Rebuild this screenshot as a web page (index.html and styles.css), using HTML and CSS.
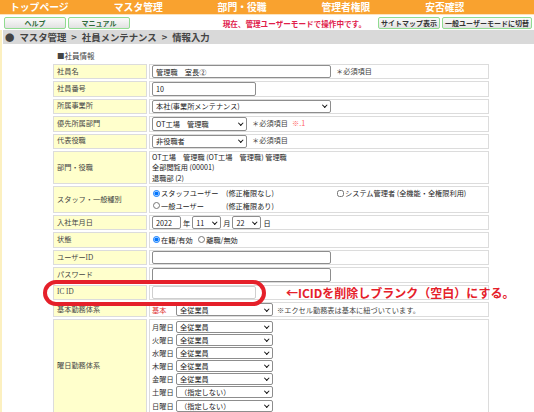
FILE: index.html
```html
<!DOCTYPE html>
<html lang="ja">
<head>
    <meta charset="UTF-8">
    <meta name="viewport" content="width=device-width, initial-scale=1.0">
    <title>社員メンテナンス</title>
    <link rel="stylesheet" href="styles.css">
</head>
<body>
    <div class="top-menu">
        <span>トップページ</span>
        <span>マスタ管理</span>
        <span>部門・役職</span>
        <span>管理者権限</span>
        <span>安否確認</span>
    </div>
    <div class="tool-bar">
        <button class="btn btn-left">ヘルプ</button>
        <button class="btn btn-left">マニュアル</button>
        <span class="mode-msg">現在、管理ユーザーモードで操作中です。</span>
        <button class="btn btn-sitemap">サイトマップ表示</button>
        <button class="btn btn-switch">一般ユーザーモードに切替</button>
    </div>

    <div class="main">
        <div class="breadcrumb"><span class="dot">●</span>マスタ管理<span class="sep">&gt;</span>社員メンテナンス<span class="sep">&gt;</span>情報入力</div>
        <div class="section-title">■社員情報</div>

        <table class="form-table">
            <tr>
                <td class="label">社員名</td>
                <td class="value"><input type="text" class="w-long" value="管理職　室長②"><span class="req">＊必須項目</span></td>
            </tr>
            <tr>
                <td class="label">社員番号</td>
                <td class="value"><input type="text" class="w-short" value="10"></td>
            </tr>
            <tr>
                <td class="label">所属事業所</td>
                <td class="value"><span class="sel"><select class="w-long"><option>本社(事業所メンテナンス)</option></select></span></td>
            </tr>
            <tr>
                <td class="label">優先所属部門</td>
                <td class="value"><span class="sel"><select class="w-mid"><option>OT工場　管理職</option></select></span><span class="req">＊必須項目</span><span class="note-red">※.1</span></td>
            </tr>
            <tr>
                <td class="label">代表役職</td>
                <td class="value"><span class="sel"><select class="w-mid"><option>非役職者</option></select></span><span class="req">＊必須項目</span></td>
            </tr>
            <tr>
                <td class="label">部門・役職</td>
                <td class="value multi">
                    OT工場　管理職 (OT工場　管理職) 管理職<br>
                    全部閲覧用 (00001)<br>
                    退職部 (2)
                </td>
            </tr>
            <tr>
                <td class="label">スタッフ・一般種別</td>
                <td class="value">
                    <div class="kind-grid">
                        <label><input type="radio" name="kind" checked>スタッフユーザー</label>
                        <span>(修正権限なし)</span>
                        <label><input type="checkbox">システム管理者 (全機能・全権限利用)</label>
                        <label><input type="radio" name="kind">一般ユーザー</label>
                        <span>(修正権限あり)</span>
                    </div>
                </td>
            </tr>
            <tr>
                <td class="label">入社年月日</td>
                <td class="value">
                    <input type="text" class="w-year" value="2022"><span class="unit">年</span><span class="sel"><select class="w-md"><option>11</option></select></span><span class="unit">月</span><span class="sel"><select class="w-md"><option>22</option></select></span><span class="unit">日</span>
                </td>
            </tr>
            <tr>
                <td class="label">状態</td>
                <td class="value">
                    <label class="state"><input type="radio" name="state" checked>在籍/有効</label>
                    <label class="state"><input type="radio" name="state">離職/無効</label>
                </td>
            </tr>
            <tr>
                <td class="label">ユーザーID</td>
                <td class="value"><input type="text" class="w-long"></td>
            </tr>
            <tr>
                <td class="label">パスワード</td>
                <td class="value"><input type="text" class="w-long"></td>
            </tr>
            <tr>
                <td class="label">IC ID</td>
                <td class="value"><input type="text" class="w-short ic-input"></td>
            </tr>
            <tr>
                <td class="label">基本勤務体系</td>
                <td class="value">
                    <table class="days">
                        <tr>
                            <td class="day base">基本</td>
                            <td><span class="sel"><select class="w-day"><option>全従業員</option></select></span></td>
                            <td class="excel-note">※エクセル勤務表は基本に紐づいています。</td>
                        </tr>
                    </table>
                </td>
            </tr>
            <tr>
                <td class="label">曜日勤務体系</td>
                <td class="value">
                    <table class="days week">
                        <tr><td class="day">月曜日</td><td><span class="sel"><select class="w-day"><option>全従業員</option></select></span></td></tr>
                        <tr><td class="day">火曜日</td><td><span class="sel"><select class="w-day"><option>全従業員</option></select></span></td></tr>
                        <tr><td class="day">水曜日</td><td><span class="sel"><select class="w-day"><option>全従業員</option></select></span></td></tr>
                        <tr><td class="day">木曜日</td><td><span class="sel"><select class="w-day"><option>全従業員</option></select></span></td></tr>
                        <tr><td class="day">金曜日</td><td><span class="sel"><select class="w-day"><option>全従業員</option></select></span></td></tr>
                        <tr><td class="day">土曜日</td><td><span class="sel"><select class="w-day"><option>（指定しない）</option></select></span></td></tr>
                        <tr><td class="day">日曜日</td><td><span class="sel"><select class="w-day"><option>（指定しない）</option></select></span></td></tr>
                    </table>
                </td>
            </tr>
        </table>

        <!-- 注記（赤枠と説明） -->
        <div class="mark-box"></div>
        <div class="mark-note">←ICIDを削除しブランク（空白）にする。</div>
    </div>
</body>
</html>
```

FILE: styles.css
```css
body {
    margin: 0;
    font-family: "Noto Sans CJK JP", sans-serif;
    font-size: 7.2px;
    color: #333;
    background: #fff;
}

/* 上部メニュー */
.top-menu {
    display: flex;
    height: 15px;
    padding-left: 10px;
    background: #f9a22f;
    border-bottom: 1px solid #fde3bd;
    box-sizing: border-box;
}

.top-menu span {
    width: 103.8px;
    color: #fff;
    font-size: 9.8px;
    font-weight: bold;
    line-height: 14px;
}

.tool-bar {
    display: flex;
    align-items: center;
    height: 15px;
    padding: 0 2px 0 4px;
    gap: 2px;
}

.btn {
    height: 12px;
    padding: 0;
    font-family: inherit;
    font-size: 7px;
    font-weight: bold;
    line-height: 10px;
    color: #333;
    border: 1px solid #90dc90;
    border-radius: 2px;
    background: linear-gradient(#fbfbfb, #e2e2e2);
}

.btn-left {
    width: 62px;
    color: #2f6a3a;
}

.btn-sitemap {
    width: 62px;
}

.btn-switch {
    width: 90px;
}

.mode-msg {
    margin-left: auto;
    margin-right: 10px;
    color: #e0204a;
    font-size: 7.6px;
    font-weight: bold;
    line-height: 12px;
    padding-top: 2px;
}

/* メイン */
.main {
    position: relative;
    border-left: 2px solid #fcf0c0;
    padding-left: 1px;
}

.breadcrumb {
    height: 14px;
    line-height: 14px;
    padding-left: 2px;
    background: #d9d9d9;
    color: #444;
    font-size: 9.4px;
    font-weight: bold;
}

.breadcrumb .dot {
    margin-right: 5px;
}

.breadcrumb .sep {
    margin: 0 5px;
}

.section-title {
    height: 18px;
    padding: 6px 0 0 54px;
    box-sizing: border-box;
    font-size: 7.5px;
    line-height: 12px;
    color: #444;
}

.form-table {
    width: 440px;
    margin-left: 48px;
    border-spacing: 2px;
    table-layout: fixed;
}

.label,
.value {
    box-sizing: border-box;
    height: 15.4px;
    border: 1px solid #dcdcdc;
    vertical-align: middle;
    line-height: 10px;
}

.label {
    width: 94px;
    padding: 0 3px;
    background: #ffffcc;
    color: #444;
    font-family: "Liberation Serif", "Noto Sans CJK JP", serif;
}

.value {
    padding: 0 2px;
    color: #222;
    white-space: nowrap;
}

.value.multi {
    line-height: 10.5px;
}

.form-table input[type="text"],
.form-table select {
    box-sizing: border-box;
    height: 13.4px;
    margin: 0;
    padding: 0 3px;
    font-family: inherit;
    font-size: 7.2px;
    color: #222;
    border: 1px solid #8d8d8d;
    border-radius: 2px;
    background: #fff;
    vertical-align: middle;
}

.form-table select {
    appearance: none;
    padding: 0 10px 0 3px;
}

/* セレクトの矢印 */
.sel {
    position: relative;
    display: inline-block;
    vertical-align: middle;
    line-height: 0;
}

.sel::after {
    content: "";
    position: absolute;
    right: 5px;
    top: 50%;
    width: 2.5px;
    height: 2.5px;
    margin-top: -3px;
    border-right: 1.5px solid #111;
    border-bottom: 1.5px solid #111;
    transform: rotate(45deg);
    pointer-events: none;
}

.w-long { width: 179px; }
.w-short { width: 104px; }
.w-mid { width: 95px; }
.w-year { width: 29px; }
.w-md { width: 29px; }
.w-day { width: 97px; }

.ic-input {
    border-color: #cfcfcf !important;
}

.req {
    margin-left: 5px;
    color: #444;
}

.note-red {
    margin-left: 4px;
    color: #ff6464;
}

.unit {
    margin: 0 2px;
    vertical-align: middle;
}

.kind-grid {
    display: grid;
    grid-template-columns: 74px 110px auto;
    line-height: 12.3px;
}

.kind-grid label,
.state {
    display: inline-flex;
    align-items: center;
}

.state {
    margin-right: 3px;
}

.form-table input[type="radio"],
.form-table input[type="checkbox"] {
    width: 7px;
    height: 7px;
    margin: 0 1px 0 1px;
}

.days {
    border-spacing: 0;
}

.days td {
    height: 13px;
    padding: 0;
    line-height: 10px;
    white-space: nowrap;
}

.week td {
    height: 13.1px;
}

.week select {
    height: 12px;
}

.day {
    width: 24px;
    color: #333;
}

.base {
    color: #e03030;
}

.excel-note {
    padding-left: 4px !important;
    color: #444;
}

/* 赤い注記 */
.mark-box {
    position: absolute;
    left: 41px;
    top: 250px;
    width: 223px;
    height: 26px;
    box-sizing: border-box;
    border: 4px solid #e5202a;
    border-radius: 13px;
}

.mark-note {
    position: absolute;
    left: 284px;
    top: 256px;
    color: #e5202a;
    font-size: 12px;
    font-weight: bold;
    line-height: 14px;
    white-space: nowrap;
}
```
